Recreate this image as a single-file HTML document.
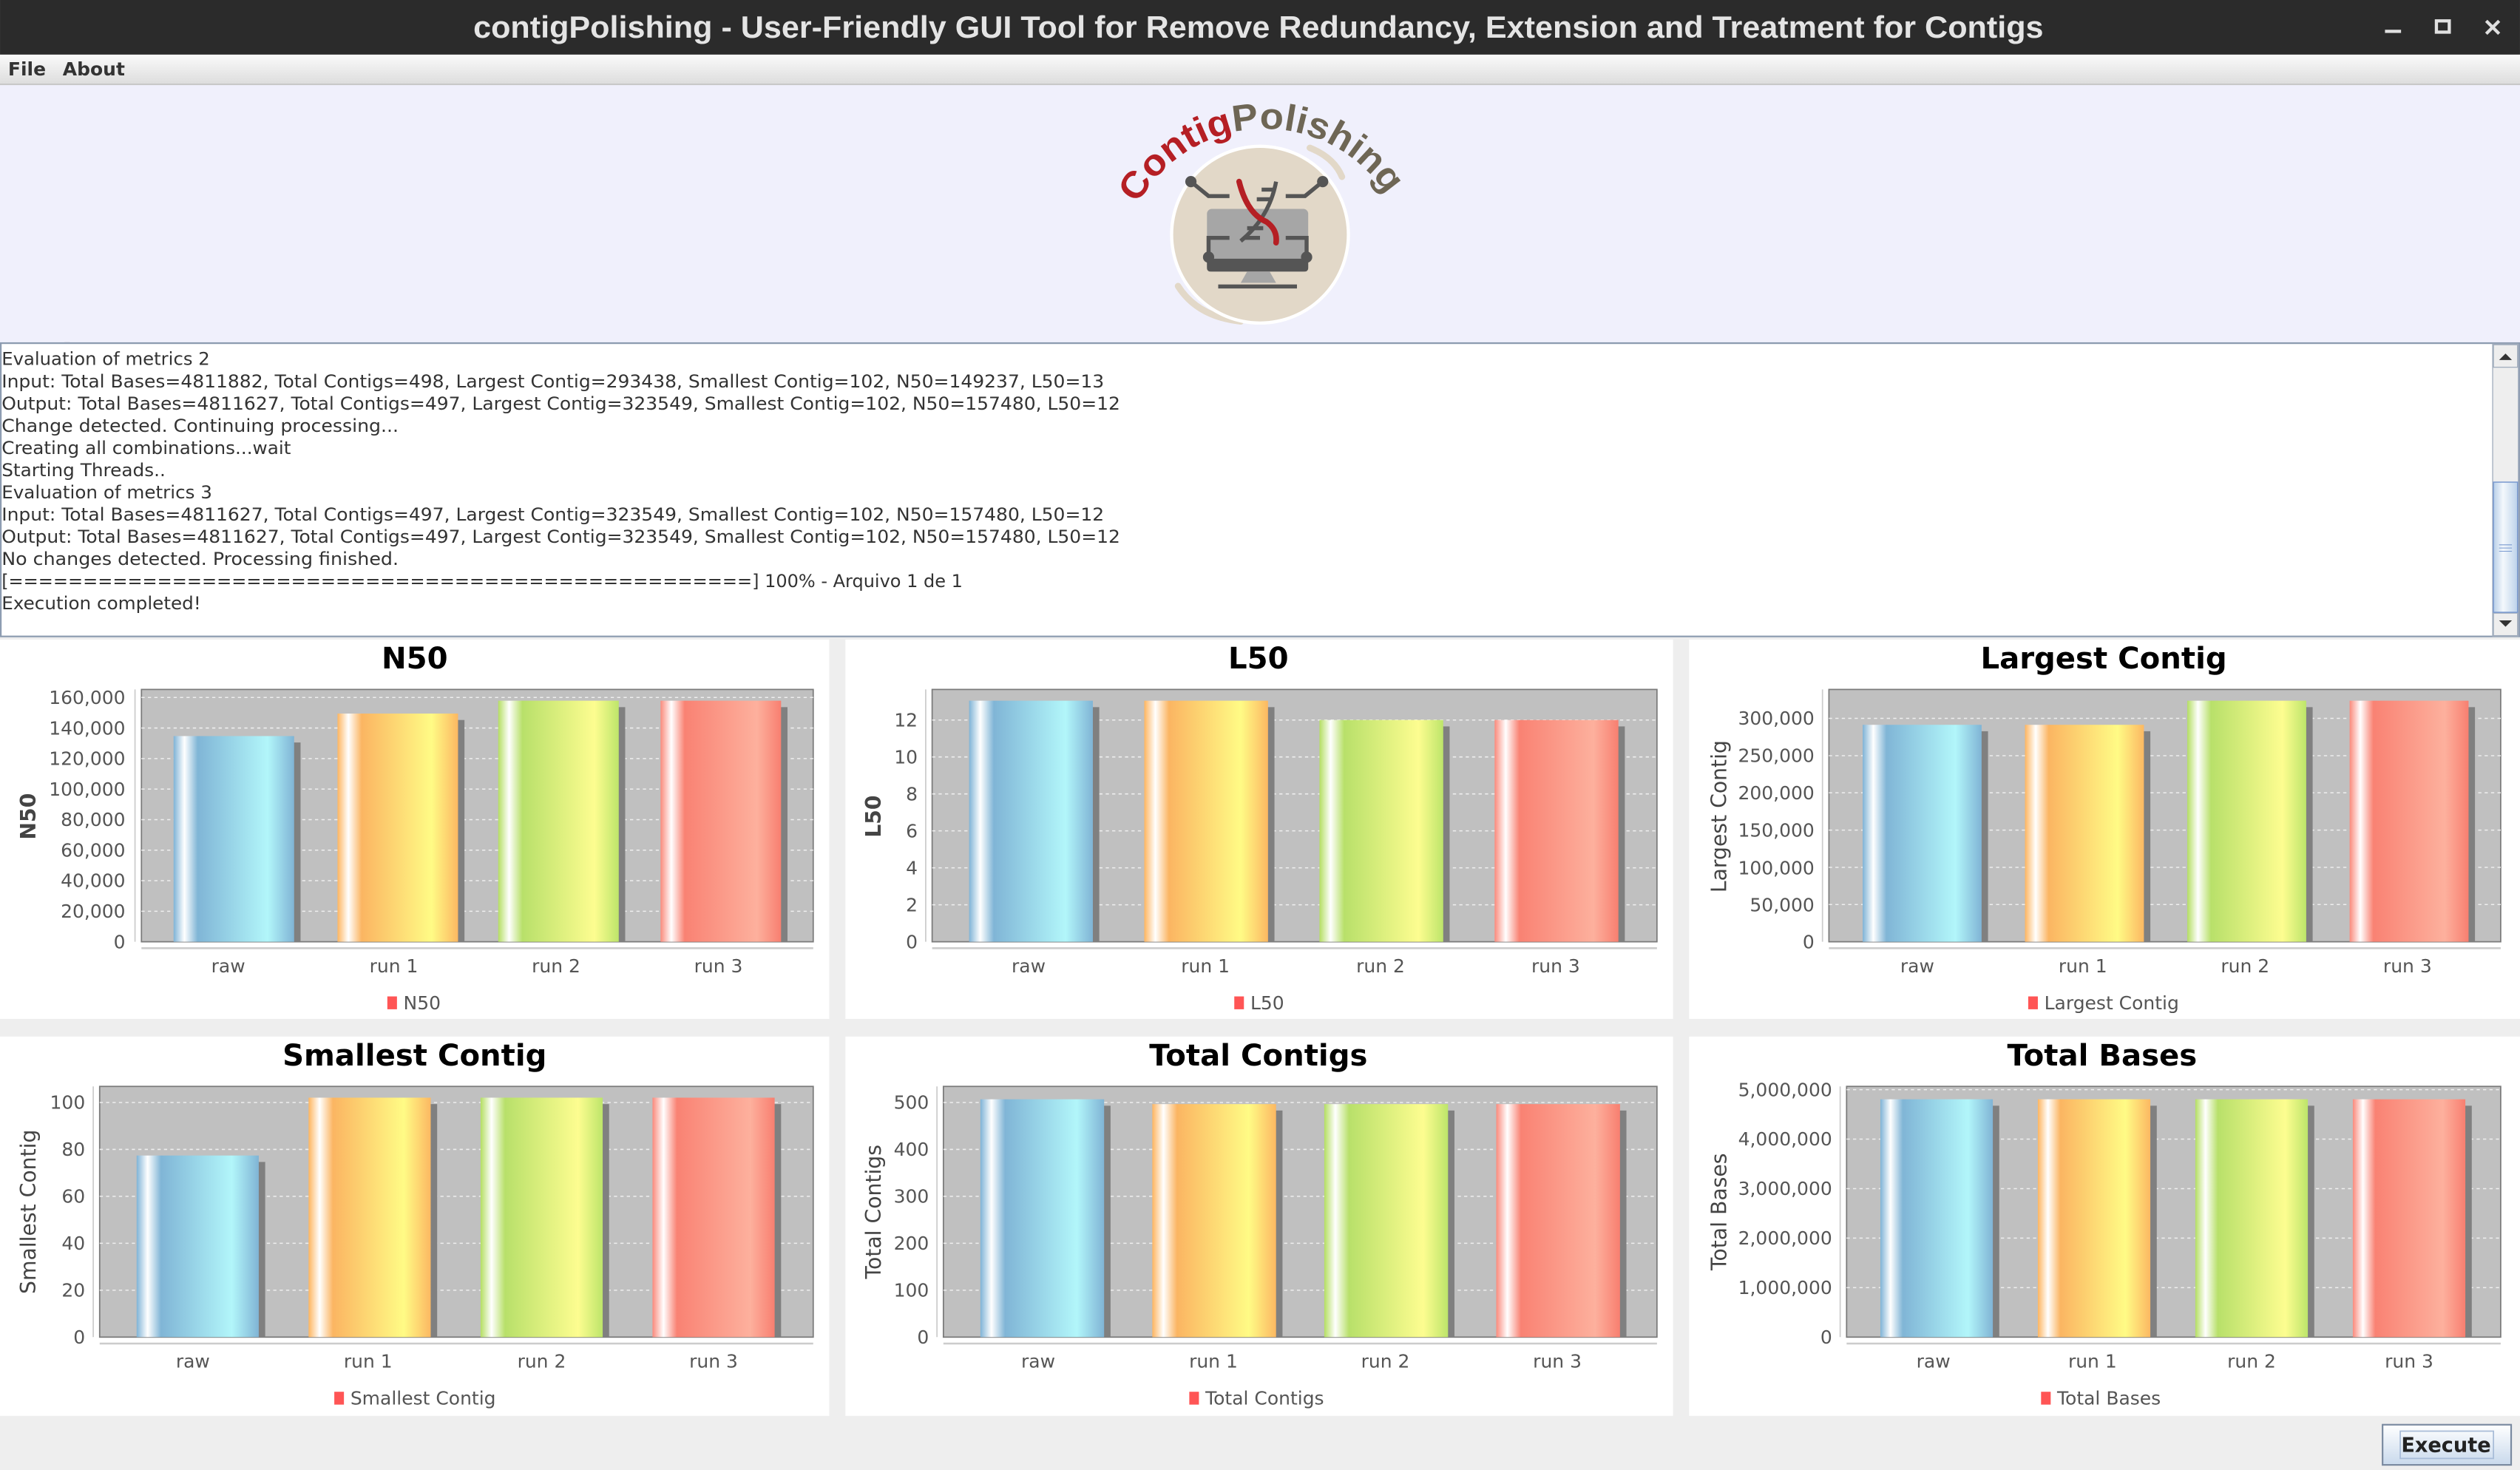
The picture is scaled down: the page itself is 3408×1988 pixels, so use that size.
<!DOCTYPE html>
<html><head><meta charset="utf-8"><style>
html,body{margin:0;padding:0;background:#eee;overflow:hidden}
svg{display:block}
text{font-family:"DejaVu Sans","Liberation Sans",sans-serif}
</style></head><body>
<svg width="3408" height="1988" viewBox="0 0 1568 914.68" xmlns="http://www.w3.org/2000/svg">
<defs>
<linearGradient id="gB"><stop offset="0" stop-color="#7fb3d6"/><stop offset="0.09" stop-color="#fff"/><stop offset="0.2" stop-color="#80b5d6"/><stop offset="0.78" stop-color="#b2f6fa"/><stop offset="1" stop-color="#80b4d5"/></linearGradient>
<linearGradient id="gO"><stop offset="0" stop-color="#fdb560"/><stop offset="0.09" stop-color="#fff"/><stop offset="0.2" stop-color="#fbb562"/><stop offset="0.78" stop-color="#fffb85"/><stop offset="1" stop-color="#fcb862"/></linearGradient>
<linearGradient id="gG"><stop offset="0" stop-color="#b4de62"/><stop offset="0.09" stop-color="#fff"/><stop offset="0.2" stop-color="#b8e06a"/><stop offset="0.8" stop-color="#fdfd90"/><stop offset="1" stop-color="#bde56a"/></linearGradient>
<linearGradient id="gR"><stop offset="0" stop-color="#fa8a7c"/><stop offset="0.09" stop-color="#fff"/><stop offset="0.2" stop-color="#f98273"/><stop offset="0.8" stop-color="#fdb09d"/><stop offset="1" stop-color="#f87f70"/></linearGradient>
<linearGradient id="gMenu" x1="0" y1="0" x2="0" y2="1"><stop offset="0" stop-color="#fafafa"/><stop offset="1" stop-color="#dcdcdc"/></linearGradient>
<linearGradient id="gBtn" x1="0" y1="0" x2="0" y2="1"><stop offset="0" stop-color="#ffffff"/><stop offset="1" stop-color="#c9d9ec"/></linearGradient>
<linearGradient id="gThumb"><stop offset="0" stop-color="#b8cfe8"/><stop offset="0.4" stop-color="#f4f8fc"/><stop offset="1" stop-color="#bcd2ea"/></linearGradient>
<path id="arc" d="M 708 127 A 90 90 0 0 1 866 127"/>
</defs>

<!-- title bar -->
<rect x="0" y="0" width="1568" height="34" fill="#2b2b2b"/>
<text x="783" y="23.5" text-anchor="middle" font-weight="bold" font-size="19" fill="#e4e4e4" textLength="977" lengthAdjust="spacingAndGlyphs" style="font-family:'Liberation Sans',sans-serif">contigPolishing - User-Friendly GUI Tool for Remove Redundancy, Extension and Treatment for Contigs</text>
<rect x="1484" y="18.5" width="10" height="2" fill="#e0e0e0"/>
<rect x="1516" y="13" width="8" height="7" fill="none" stroke="#e0e0e0" stroke-width="2"/>
<path d="M1547 13 L1555 21 M1555 13 L1547 21" stroke="#e0e0e0" stroke-width="2"/>

<!-- menu -->
<rect x="0" y="34" width="1568" height="19" fill="url(#gMenu)"/>
<rect x="0" y="52" width="1568" height="1" fill="#c8c8c8"/>
<text x="5" y="47" font-size="11.5" font-weight="bold" fill="#333">File</text>
<text x="39" y="47" font-size="11.5" font-weight="bold" fill="#333">About</text>

<!-- header -->
<rect x="0" y="53" width="1568" height="160" fill="#f0f0fc"/>
<!-- logo -->
<path d="M 733 178 Q 745 197 772 200" stroke="#e2d8c8" stroke-width="4" fill="none" stroke-linecap="round"/>
<path d="M 815 92 Q 830 98 835 110" stroke="#e2d8c8" stroke-width="4" fill="none" stroke-linecap="round"/>
<circle cx="784" cy="146" r="56" fill="#fff"/>
<circle cx="784" cy="146" r="54" fill="#e2d8c8"/>
<rect x="751" y="130" width="63" height="39" rx="3" fill="#a6a6a6"/>
<rect x="751" y="161" width="63" height="8" rx="2" fill="#555"/>
<path d="M776 169 L790 169 L794 176 L772 176 Z" fill="#a6a6a6"/>
<rect x="758" y="177" width="49" height="2.5" fill="#555"/>
<g stroke="#555" stroke-width="2.5" fill="none">
<path d="M741 113 L752 122 L765 122"/><path d="M823 113 L812 122 L800 122"/>
<path d="M765 148 L752 148 L752 160"/><path d="M800 148 L813 148 L813 160"/>
<path d="M794 113 Q790 135 772 150"/><path d="M785 118 L793 118 M782 124 L790 124 M776 142 L786 142 M774 148 L784 148"/>
</g>
<g fill="#555"><circle cx="741" cy="113" r="3.5"/><circle cx="823" cy="113" r="3.5"/><circle cx="752" cy="160" r="3.5"/><circle cx="813" cy="160" r="3.5"/></g>
<path d="M771 113 Q776 133 788 138 Q795 143 794 151" stroke="#b51f24" stroke-width="3.5" fill="none" stroke-linecap="round"/>
<text font-weight="bold" font-size="23" style="font-family:'Liberation Sans',sans-serif"><textPath href="#arc" textLength="186" lengthAdjust="spacingAndGlyphs"><tspan fill="#b51f24">Contig</tspan><tspan fill="#6e6655">Polishing</tspan></textPath></text>

<!-- log -->
<rect x="0.5" y="213.5" width="1567" height="182.5" fill="#fff" stroke="#8c9bb0"/>
<g font-size="11.2" fill="#333">
<text x="1" y="211">Starting Threads..</text>
<text x="1" y="227">Evaluation of metrics 2</text>
<text x="1" y="241" textLength="686" lengthAdjust="spacingAndGlyphs">Input: Total Bases=4811882, Total Contigs=498, Largest Contig=293438, Smallest Contig=102, N50=149237, L50=13</text>
<text x="1" y="255" textLength="696" lengthAdjust="spacingAndGlyphs">Output: Total Bases=4811627, Total Contigs=497, Largest Contig=323549, Smallest Contig=102, N50=157480, L50=12</text>
<text x="1" y="268.8" textLength="247" lengthAdjust="spacingAndGlyphs">Change detected. Continuing processing...</text>
<text x="1" y="282.6" textLength="180" lengthAdjust="spacingAndGlyphs">Creating all combinations...wait</text>
<text x="1" y="296.4" textLength="102" lengthAdjust="spacingAndGlyphs">Starting Threads..</text>
<text x="1" y="310.2" textLength="131" lengthAdjust="spacingAndGlyphs">Evaluation of metrics 3</text>
<text x="1" y="324" textLength="686" lengthAdjust="spacingAndGlyphs">Input: Total Bases=4811627, Total Contigs=497, Largest Contig=323549, Smallest Contig=102, N50=157480, L50=12</text>
<text x="1" y="337.8" textLength="696" lengthAdjust="spacingAndGlyphs">Output: Total Bases=4811627, Total Contigs=497, Largest Contig=323549, Smallest Contig=102, N50=157480, L50=12</text>
<text x="1" y="351.6" textLength="247" lengthAdjust="spacingAndGlyphs">No changes detected. Processing finished.</text>
<text x="1" y="365.4" textLength="598" lengthAdjust="spacingAndGlyphs">[==================================================] 100% - Arquivo 1 de 1</text>
<text x="1" y="379.2" textLength="124" lengthAdjust="spacingAndGlyphs">Execution completed!</text>
</g>
<rect x="0" y="202" width="1568" height="11" fill="#f0f0fc"/>
<rect x="0" y="213" width="1568" height="1" fill="#8c9bb0"/>
<!-- scrollbar -->
<rect x="1551" y="214" width="16" height="182" fill="#eee" stroke="#a0acbc" stroke-width="0.6"/>
<rect x="1551.5" y="214.5" width="15" height="14" fill="#eee" stroke="#a0acbc" stroke-width="0.6"/>
<path d="M1555 224 L1559 220 L1563 224 Z" fill="#333"/>
<rect x="1551.5" y="381.5" width="15" height="14" fill="#eee" stroke="#a0acbc" stroke-width="0.6"/>
<path d="M1555 386 L1559 390 L1563 386 Z" fill="#333"/>
<rect x="1551.5" y="300" width="15" height="81" fill="url(#gThumb)" stroke="#7a9ad0" stroke-width="0.7"/>
<path d="M1555 339 H1563 M1555 341 H1563 M1555 343 H1563" stroke="#7a9ad0" stroke-width="0.5"/>

<!-- panels -->
<rect x="0" y="398" width="516" height="236" fill="#fff"/>
<rect x="526" y="398" width="515" height="236" fill="#fff"/>
<rect x="1051" y="398" width="517" height="236" fill="#fff"/>
<rect x="0" y="645" width="516" height="236" fill="#fff"/>
<rect x="526" y="645" width="515" height="236" fill="#fff"/>
<rect x="1051" y="645" width="517" height="236" fill="#fff"/>

<g font-size="18.5" font-weight="bold" fill="#000" text-anchor="middle">
<text x="258" y="416">N50</text><text x="783" y="416">L50</text><text x="1309" y="416">Largest Contig</text>
<text x="258" y="663">Smallest Contig</text><text x="783" y="663">Total Contigs</text><text x="1308" y="663">Total Bases</text>
</g>

<!-- plot backgrounds -->
<g fill="#c0c0c0" stroke="#7a7a7a" stroke-width="0.8">
<rect x="88" y="429" width="418" height="157"/>
<rect x="580" y="429" width="451" height="157"/>
<rect x="1138" y="429" width="418" height="157"/>
<rect x="62" y="676" width="444" height="156"/>
<rect x="587" y="676" width="444" height="156"/>
<rect x="1149" y="676" width="407" height="156"/>
</g>
<g stroke="#eee" stroke-width="0.7" stroke-dasharray="2,2">
<path d="M88 567H506M88 548H506M88 529H506M88 510H506M88 491H506M88 472H506M88 453H506M88 434H506"/>
<path d="M580 563H1031M580 540H1031M580 517H1031M580 494H1031M580 471H1031M580 448H1031"/>
<path d="M1138 562.8H1556M1138 539.7H1556M1138 516.5H1556M1138 493.3H1556M1138 470.2H1556M1138 447H1556"/>
<path d="M62 802.8H506M62 773.6H506M62 744.4H506M62 715.2H506M62 686H506"/>
<path d="M587 802.8H1031M587 773.6H1031M587 744.4H1031M587 715.2H1031M587 686H1031"/>
<path d="M1149 801.2H1556M1149 770.4H1556M1149 739.6H1556M1149 708.8H1556M1149 678H1556"/>
</g>
<g stroke="#ccc" stroke-width="1.2">
<path d="M88 590H506M580 590H1031M1138 590H1556M62 836H506M587 836H1031M1149 836H1556"/>
<path d="M84 429V586M576 429V586M1134 429V586M58 676V832M583 676V832M1145 676V832" stroke-width="0.8"/>
</g>

<g fill="#808080">
<rect x="112" y="462" width="75" height="124"/><rect x="214" y="448" width="75" height="138"/><rect x="314" y="440" width="75" height="146"/><rect x="415" y="440" width="75" height="146"/>
<rect x="607" y="440" width="77" height="146"/><rect x="716" y="440" width="77" height="146"/><rect x="825" y="452" width="77" height="134"/><rect x="934" y="452" width="77" height="134"/>
<rect x="1163" y="455" width="74" height="131"/><rect x="1264" y="455" width="74" height="131"/><rect x="1365" y="440" width="74" height="146"/><rect x="1466" y="440" width="74" height="146"/>
<rect x="89" y="723" width="76" height="109"/><rect x="196" y="687" width="76" height="145"/><rect x="303" y="687" width="76" height="145"/><rect x="410" y="687" width="76" height="145"/>
<rect x="614" y="688" width="77" height="144"/><rect x="721" y="691" width="77" height="141"/><rect x="828" y="691" width="77" height="141"/><rect x="935" y="691" width="77" height="141"/>
<rect x="1174" y="688" width="70" height="144"/><rect x="1272" y="688" width="70" height="144"/><rect x="1370" y="688" width="70" height="144"/><rect x="1468" y="688" width="70" height="144"/>
</g>
<rect x="108" y="458" width="75" height="128" fill="url(#gB)"/><rect x="210" y="444" width="75" height="142" fill="url(#gO)"/><rect x="310" y="436" width="75" height="150" fill="url(#gG)"/><rect x="411" y="436" width="75" height="150" fill="url(#gR)"/>
<rect x="603" y="436" width="77" height="150" fill="url(#gB)"/><rect x="712" y="436" width="77" height="150" fill="url(#gO)"/><rect x="821" y="448" width="77" height="138" fill="url(#gG)"/><rect x="930" y="448" width="77" height="138" fill="url(#gR)"/>
<rect x="1159" y="451" width="74" height="135" fill="url(#gB)"/><rect x="1260" y="451" width="74" height="135" fill="url(#gO)"/><rect x="1361" y="436" width="74" height="150" fill="url(#gG)"/><rect x="1462" y="436" width="74" height="150" fill="url(#gR)"/>
<rect x="85" y="719" width="76" height="113" fill="url(#gB)"/><rect x="192" y="683" width="76" height="149" fill="url(#gO)"/><rect x="299" y="683" width="76" height="149" fill="url(#gG)"/><rect x="406" y="683" width="76" height="149" fill="url(#gR)"/>
<rect x="610" y="684" width="77" height="148" fill="url(#gB)"/><rect x="717" y="687" width="77" height="145" fill="url(#gO)"/><rect x="824" y="687" width="77" height="145" fill="url(#gG)"/><rect x="931" y="687" width="77" height="145" fill="url(#gR)"/>
<rect x="1170" y="684" width="70" height="148" fill="url(#gB)"/><rect x="1268" y="684" width="70" height="148" fill="url(#gO)"/><rect x="1366" y="684" width="70" height="148" fill="url(#gG)"/><rect x="1464" y="684" width="70" height="148" fill="url(#gR)"/>

<g font-size="11.5" fill="#555" text-anchor="end">
<text x="78" y="590">0</text><text x="78" y="571">20,000</text><text x="78" y="552">40,000</text><text x="78" y="533">60,000</text><text x="78" y="514">80,000</text><text x="78" y="495">100,000</text><text x="78" y="476">120,000</text><text x="78" y="457">140,000</text><text x="78" y="438">160,000</text>
<text x="571" y="590">0</text><text x="571" y="567">2</text><text x="571" y="544">4</text><text x="571" y="521">6</text><text x="571" y="498">8</text><text x="571" y="475">10</text><text x="571" y="452">12</text>
<text x="1129" y="590">0</text><text x="1129" y="567">50,000</text><text x="1129" y="544">100,000</text><text x="1129" y="520.5">150,000</text><text x="1129" y="497.3">200,000</text><text x="1129" y="474.2">250,000</text><text x="1129" y="451">300,000</text>
<text x="53" y="836">0</text><text x="53" y="806.8">20</text><text x="53" y="777.6">40</text><text x="53" y="748.4">60</text><text x="53" y="719.2">80</text><text x="53" y="690">100</text>
<text x="578" y="836">0</text><text x="578" y="806.8">100</text><text x="578" y="777.6">200</text><text x="578" y="748.4">300</text><text x="578" y="719.2">400</text><text x="578" y="690">500</text>
<text x="1140" y="836">0</text><text x="1140" y="805.2">1,000,000</text><text x="1140" y="774.4">2,000,000</text><text x="1140" y="743.6">3,000,000</text><text x="1140" y="712.8">4,000,000</text><text x="1140" y="682">5,000,000</text>
</g>
<g font-size="11.5" fill="#555" text-anchor="middle">
<text x="142" y="605">raw</text><text x="245" y="605">run 1</text><text x="346" y="605">run 2</text><text x="447" y="605">run 3</text>
<text x="640" y="605">raw</text><text x="750" y="605">run 1</text><text x="859" y="605">run 2</text><text x="968" y="605">run 3</text>
<text x="1193" y="605">raw</text><text x="1296" y="605">run 1</text><text x="1397" y="605">run 2</text><text x="1498" y="605">run 3</text>
<text x="120" y="851">raw</text><text x="229" y="851">run 1</text><text x="337" y="851">run 2</text><text x="444" y="851">run 3</text>
<text x="646" y="851">raw</text><text x="755" y="851">run 1</text><text x="862" y="851">run 2</text><text x="969" y="851">run 3</text>
<text x="1203" y="851">raw</text><text x="1302" y="851">run 1</text><text x="1401" y="851">run 2</text><text x="1499" y="851">run 3</text>
</g>
<g font-size="13" fill="#444" text-anchor="middle">
<text transform="translate(22,508) rotate(-90)" font-weight="bold">N50</text>
<text transform="translate(548,508) rotate(-90)" font-weight="bold">L50</text>
<text transform="translate(1074,508) rotate(-90)">Largest Contig</text>
<text transform="translate(22,754) rotate(-90)">Smallest Contig</text>
<text transform="translate(548,754) rotate(-90)">Total Contigs</text>
<text transform="translate(1074,754) rotate(-90)">Total Bases</text>
</g>
<g fill="#f55">
<rect x="241" y="620" width="6" height="8"/><rect x="768" y="620" width="6" height="8"/><rect x="1262" y="620" width="6" height="8"/>
<rect x="208" y="866" width="6" height="8"/><rect x="740" y="866" width="6" height="8"/><rect x="1270" y="866" width="6" height="8"/>
</g>
<g font-size="11.5" fill="#555">
<text x="251" y="628">N50</text><text x="778" y="628">L50</text><text x="1272" y="628">Largest Contig</text>
<text x="218" y="874">Smallest Contig</text><text x="750" y="874">Total Contigs</text><text x="1280" y="874">Total Bases</text>
</g>

<rect x="1482.5" y="886.5" width="80" height="25" fill="url(#gBtn)" stroke="#7a8aa0"/>
<rect x="1493.5" y="890.5" width="58" height="17" fill="none" stroke="#a8bcd8" stroke-width="0.8"/>
<text x="1522" y="903.5" text-anchor="middle" font-size="12.5" font-weight="bold" fill="#222">Execute</text>
</svg>
</body></html>
